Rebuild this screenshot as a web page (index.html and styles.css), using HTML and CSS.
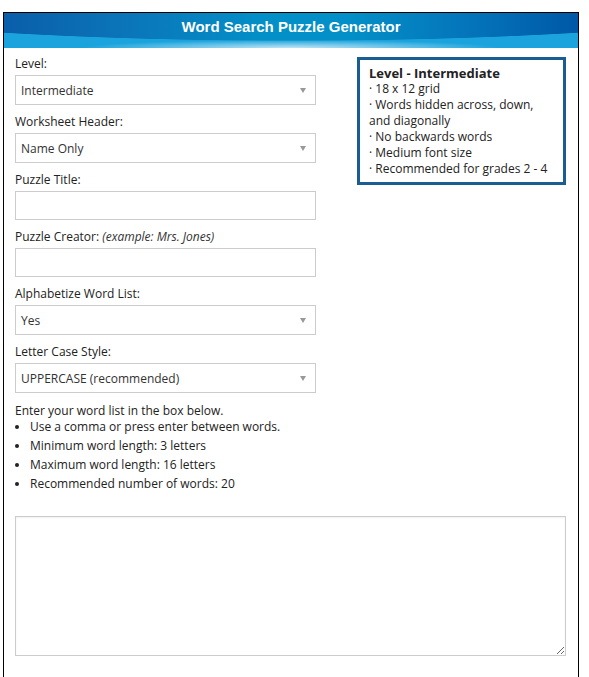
FILE: index.html
```html
<!DOCTYPE html>
<html>
<head>
<meta charset="utf-8">
<link rel="stylesheet" href="styles.css">
</head>
<body>
<div class="panel">
  <div class="header">Word Search Puzzle Generator</div>
  <div class="content">
    <div class="top">
      <div class="form">
        <div class="field">
          <div class="label">Level:</div>
          <div class="select"><span>Intermediate</span><span class="arrow"></span></div>
        </div>
        <div class="field">
          <div class="label">Worksheet Header:</div>
          <div class="select"><span>Name Only</span><span class="arrow"></span></div>
        </div>
        <div class="field">
          <div class="label">Puzzle Title:</div>
          <div class="input"></div>
        </div>
        <div class="field">
          <div class="label">Puzzle Creator: <em>(example: Mrs. Jones)</em></div>
          <div class="input"></div>
        </div>
        <div class="field">
          <div class="label">Alphabetize Word List:</div>
          <div class="select"><span>Yes</span><span class="arrow"></span></div>
        </div>
        <div class="field">
          <div class="label">Letter Case Style:</div>
          <div class="select"><span>UPPERCASE (recommended)</span><span class="arrow"></span></div>
        </div>
        <p class="intro">Enter your word list in the box below.</p>
        <ul class="rules">
          <li>Use a comma or press enter between words.</li>
          <li>Minimum word length: 3 letters</li>
          <li>Maximum word length: 16 letters</li>
          <li>Recommended number of words: 20</li>
        </ul>
      </div>
      <div class="info">
        <div class="info-title">Level - Intermediate</div>
        <div>· 18 x 12 grid</div>
        <div>· Words hidden across, down, and diagonally</div>
        <div>· No backwards words</div>
        <div>· Medium font size</div>
        <div>· Recommended for grades 2 - 4</div>
      </div>
    </div>
    <textarea class="words"></textarea>
  </div>
</div>
</body>
</html>
```

FILE: styles.css
```css
html, body {
  margin: 0;
  padding: 0;
  background: #fff;
}
body {
  font-family: "Open Sans", "Liberation Sans", sans-serif;
  font-size: 12px;
  color: #222;
}
.panel {
  margin: 12px 0 0 3px;
  width: 576px;
  height: 665px;
  box-sizing: border-box;
  border: 1px solid #000;
  border-bottom: none;
}
.header {
  height: 35px;
  box-sizing: border-box;
  padding-top: 4px;
  line-height: 20px;
  text-align: center;
  color: #fff;
  font-family: "Liberation Sans", Arial, sans-serif;
  font-weight: bold;
  font-size: 15px;
  background:
    radial-gradient(ellipse 210px 8px at 50% 100%, rgba(200,232,247,0.95), rgba(200,232,247,0) 100%),
    radial-gradient(ellipse 600px 65px at 50% -37px, rgba(24,166,222,0) 99%, #1aa3dc 100%),
    linear-gradient(to right, #0a5ea9 0%, #0b74b8 20%, #038fc7 45%, #038fc7 60%, #0476bb 80%, #0058a6 100%);
}
.content {
  padding: 7px 12px 0 11px;
}
.top {
  display: flex;
  justify-content: space-between;
  align-items: flex-start;
}
.form {
  width: 301px;
}
.field {
  margin-bottom: 8px;
}
.label {
  line-height: 17px;
  margin-bottom: 3px;
  color: #222;
}
.label em {
  font-style: italic;
  color: #333;
}
.select, .input {
  height: 30px;
  box-sizing: border-box;
  border: 1px solid #ccc;
  background: #fff;
}
.input {
  height: 29px;
}
.select {
  display: flex;
  align-items: center;
  justify-content: space-between;
  padding: 0 9px 0 5px;
  color: #333;
}
.arrow {
  width: 0;
  height: 0;
  border-left: 3px solid transparent;
  border-right: 3px solid transparent;
  border-top: 5px solid #999;
}
.intro {
  margin: 10px 0 0;
  line-height: 16px;
  color: #222;
}
.rules {
  margin: 0;
  padding-left: 15px;
}
.rules li {
  line-height: 16px;
  margin-bottom: 3px;
}
.info {
  margin-top: 2px;
  width: 209px;
  box-sizing: border-box;
  border: 3px solid #1a5d92;
  padding: 6px 8px 5px 9px;
  line-height: 16px;
  color: #222;
}
.info-title {
  font-weight: bold;
  font-size: 13px;
  line-height: 15px;
}
.words {
  display: block;
  margin-top: 21px;
  width: 551px;
  height: 140px;
  box-sizing: border-box;
  border: 1px solid #ccc;
  box-shadow: inset 0 1px 2px rgba(0,0,0,0.06);
  resize: both;
  font-family: "Open Sans", sans-serif;
}
```
